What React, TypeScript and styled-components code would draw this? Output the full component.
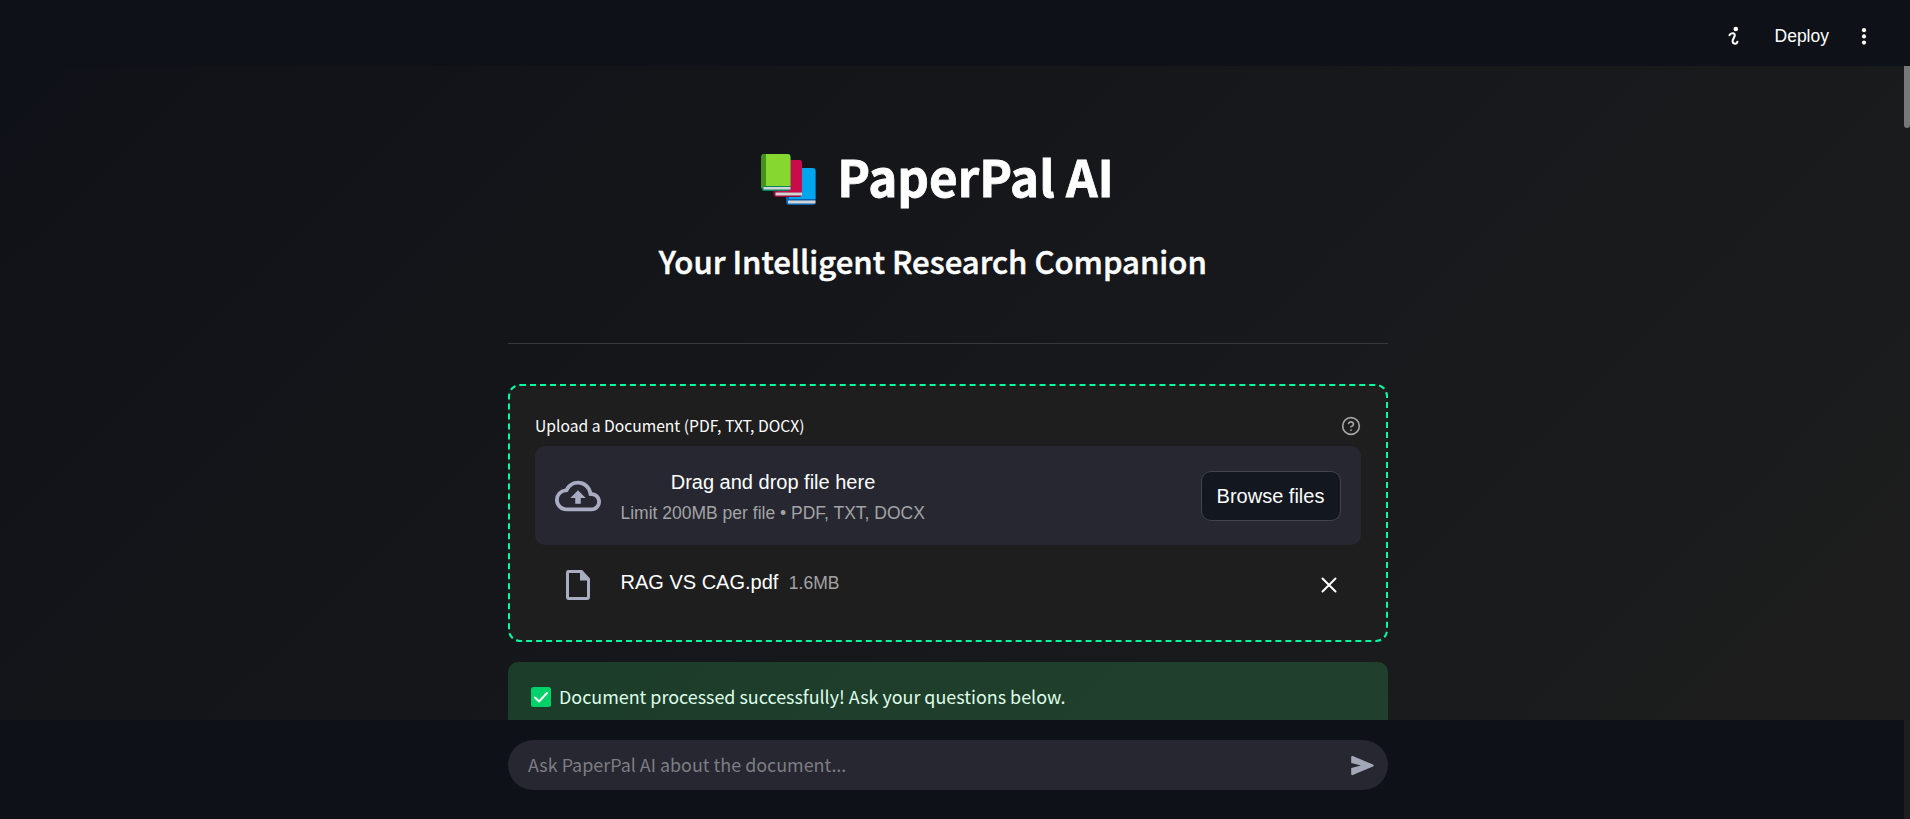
import React from "react";
import styled, { createGlobalStyle } from "styled-components";

const source = `"Source Sans Pro", "Noto Sans CJK SC", sans-serif`;
const arial = `"Liberation Sans", Arial, sans-serif`;

const GlobalStyle = createGlobalStyle`
  * { box-sizing: border-box; }
  body { margin: 0; background: #0e1117; overflow: hidden; }
  h1, h2, p { margin: 0; }
  svg { display: block; flex: none; }
`;

const Page = styled.div`
  display: grid;
  grid-template-rows: 66px 654px 99px;
  height: 819px;
  color: #fff;
  font-family: ${arial};
  background: linear-gradient(135deg, #0e1117, #1e1e1e);
`;

const Header = styled.header`
  display: flex;
  align-items: center;
  justify-content: flex-end;
  padding: 6px 36.5px 0 0;
  background: #0e1117;
`;

const Deploy = styled.button`
  margin: 0 24.5px 1px 34px;
  padding: 0;
  border: 0;
  background: none;
  color: #fff;
  font: 17.5px/24px ${arial};
`;

const Scroller = styled.div`
  display: flex;
  justify-content: space-between;
  overflow: hidden;
`;

const Thumb = styled.div`
  width: 6px;
  height: 62px;
  border-radius: 0 0 3px 3px;
  background: #787878;
`;

const Column = styled.main`
  width: 880px;
  margin-left: 508px;
`;

const Title = styled.h1`
  display: flex;
  align-items: center;
  height: 66px;
  margin-top: 80px;
  padding-left: 253px;
  gap: 21.3px;
  font: 700 49.3px/60px ${source};
  white-space: nowrap;
  -webkit-text-stroke: 0.8px #fff;

  span {
    margin-bottom: 7px;
  }
`;

const Subtitle = styled.h2`
  height: 42px;
  margin-top: 28px;
  padding-left: 150.7px;
  font: 500 31.1px/42px ${source};
  white-space: nowrap;
  -webkit-text-stroke: 0.5px #fff;
`;

const Rule = styled.hr`
  height: 1px;
  margin: 61px 0 40px;
  border: 0;
  background: #37383c;
`;

const UploadCard = styled.section`
  height: 258px;
  padding: 25px;
  border: 2px dashed #00ffa3;
  border-radius: 12px;
  background: #1e1e1e;
`;

const LabelRow = styled.div`
  display: flex;
  justify-content: space-between;
  align-items: center;
  height: 30px;
  margin-bottom: 5px;
  font: 15.65px/28px ${source};
`;

const Dropzone = styled.div`
  display: flex;
  align-items: center;
  height: 99px;
  padding: 0 20px;
  border-radius: 10px;
  background: #262730;
`;

const DropText = styled.div`
  margin-left: 19.5px;
  padding-top: 3px;
  flex: 1;
`;

const DropTitle = styled.p`
  width: 305px;
  text-align: center;
  font: 20px/31px ${arial};
`;

const Muted = styled.span`
  display: block;
  color: #a3a3a5;
  font: 17.5px/30px ${arial};
`;

const Browse = styled.button`
  width: 140px;
  height: 50px;
  padding: 0 1px 0 0;
  border: 1px solid #41444c;
  border-radius: 10px;
  background: #131720;
  color: #fff;
  font: 20px/30px ${arial};
`;

const FileRow = styled.div`
  display: flex;
  align-items: center;
  height: 80px;
  padding: 0 20.5px 0 28px;
`;

const FileName = styled.span`
  margin: 0 10.5px 7px 27.5px;
  font: 20px/30px ${arial};
`;

const FileSize = styled(Muted)`
  flex: 1;
  margin-bottom: 4px;
`;

const Success = styled.div`
  display: flex;
  align-items: center;
  gap: 8px;
  height: 90px;
  margin-top: 20px;
  padding: 0 23px 20px;
  border-radius: 10px;
  background: rgba(61, 213, 109, 0.2);
  color: #dffde9;
  font: 17.92px/28px ${source};

  span {
    margin-bottom: 2px;
  }
`;

const Bottom = styled.footer`
  width: 1904px;
  padding: 20px 0 0 508px;
  background: #0e1117;
`;

const ChatBox = styled.div`
  display: flex;
  align-items: center;
  justify-content: space-between;
  width: 880px;
  height: 50px;
  padding: 0 13px 0 20px;
  border-radius: 25px;
  background: #262730;
  color: #7d7d83;
  font: 17.92px/28px ${source};

  span {
    margin-bottom: 2px;
  }
`;

const Books = () => (
  <svg width="55" height="51" viewBox="0 0 55 51" stroke="none">
    <rect x="25" y="14" width="29.5" height="37" rx="3" fill="#0063b1" />
    <path d="M28 14h23.500q3 0 3 3v28H28z" fill="#00a6ed" />
    <path d="M27 46.500h27.500v3H27z" fill="#d3d3d3" />
    <rect x="12.500" y="6" width="28.500" height="37" rx="3" fill="#990838" />
    <path d="M16 6h22q3 0 3 3v29H16z" fill="#ca0b4a" />
    <path d="M14.500 38.500H41v3H14.500z" fill="#d3d3d3" />
    <rect x="0.500" y="0" width="29" height="37" rx="3" fill="#008463" />
    <path d="M3.500 0h23q3 0 3 3v29H4.500Q2 32 0.500 34V3Q0.500 0 3.500 0z" fill="#86d72f" />
    <path d="M3.500 0h1.500v32Q2 32 0.500 34V3Q0.500 0 3.500 0z" fill="#44911b" />
    <path d="M2.500 33h27v2.500h-27z" fill="#d3d3d3" />
  </svg>
);

const Check = () => (
  <svg width="20" height="20" viewBox="0 0 20 20">
    <rect width="20" height="20" rx="2.500" fill="#00d26a" />
    <path d="M4 10.500 8 14.500 16 6" fill="none" stroke="#fff" strokeWidth="2" strokeLinecap="round" strokeLinejoin="round" />
  </svg>
);

export default function App() {
  return (
    <>
      <GlobalStyle />
      <Page>
        <Header>
          <svg width="13" height="20" viewBox="0 0 13 20" fill="none" stroke="#fff" strokeWidth="2.100" strokeLinecap="round">
            <circle cx="7.800" cy="3" r="2.300" fill="#fff" stroke="none" />
            <path d="M1.500 9.200C2.500 6.600 7.800 6.200 6.600 10.200L4.800 14C3.600 18.200 8.400 18.800 9.400 15.800" />
          </svg>
          <Deploy>Deploy</Deploy>
          <svg width="20" height="20" viewBox="0 0 20 20" fill="#fff">
            <circle cx="10" cy="4.200" r="2.100" />
            <circle cx="10" cy="10.400" r="2.100" />
            <circle cx="10" cy="16.600" r="2.100" />
          </svg>
        </Header>
        <Scroller>
          <Column>
            <Title><Books /><span>PaperPal AI</span></Title>
            <Subtitle>Your Intelligent Research Companion</Subtitle>
            <Rule />
            <UploadCard>
              <LabelRow>
                <span>Upload a Document (PDF, TXT, DOCX)</span>
                <svg width="20" height="20" viewBox="0 0 24 24" fill="none" stroke="#a3a3a3" strokeWidth="2" strokeLinecap="round" strokeLinejoin="round">
                  <circle cx="12" cy="12" r="10" />
                  <path d="M9.090 9a3 3 0 0 1 5.830 1c0 2-3 3-3 3M12 17h.010" />
                </svg>
              </LabelRow>
              <Dropzone>
                <svg width="46" height="46" viewBox="0 0 24 24" fill="#a9adc1">
                  <path d="M19.350 10.040A7.490 7.490 0 0 0 12 4C9.110 4 6.600 5.640 5.350 8.040A5.994 5.994 0 0 0 0 14c0 3.310 2.690 6 6 6h13c2.760 0 5-2.240 5-5 0-2.640-2.050-4.780-4.650-4.960zM19 18H6c-2.210 0-4-1.790-4-4 0-2.050 1.530-3.760 3.560-3.970l1.070-.110.500-.950A5.469 5.469 0 0 1 12 6c2.620 0 4.880 1.860 5.390 4.430l.300 1.500 1.530.110A2.980 2.980 0 0 1 22 15c0 1.650-1.350 3-3 3zM8 13h2.550v3h2.900v-3H16l-4-4-4 4z" />
                </svg>
                <DropText>
                  <DropTitle>Drag and drop file here</DropTitle>
                  <Muted>Limit 200MB per file • PDF, TXT, DOCX</Muted>
                </DropText>
                <Browse>Browse files</Browse>
              </Dropzone>
              <FileRow>
                <svg width="30" height="30" viewBox="0 0 30 30">
                  <path d="M5.500 1.500H18.500L25.500 9V27Q25.500 28.500 24 28.500H5.500Q4.500 28.500 4.500 27V3Q4.500 1.500 5.500 1.500z" fill="none" stroke="#a9adc1" strokeWidth="3" />
                  <path d="M17 1V10.500H26z" fill="#a9adc1" />
                </svg>
                <FileName>RAG VS CAG.pdf</FileName>
                <FileSize>1.6MB</FileSize>
                <svg width="24" height="24" viewBox="0 0 24 24" stroke="#fff" strokeWidth="2" strokeLinecap="round">
                  <path d="M5.500 5.500 18.500 18.500M18.500 5.500 5.500 18.500" />
                </svg>
              </FileRow>
            </UploadCard>
            <Success><Check /><span>Document processed successfully! Ask your questions below.</span></Success>
          </Column>
          <Thumb />
        </Scroller>
        <Bottom>
          <ChatBox>
            <span>Ask PaperPal AI about the document...</span>
            <svg width="25" height="25" viewBox="0 0 25 25" fill="#a3a8b8">
              <path d="M1.200 4Q1.200 2.500 2.700 3L23 11.500Q24.500 12.500 23 13.500L2.700 22Q1.200 22.500 1.200 21V15L11 12.500 1.200 10z" />
            </svg>
          </ChatBox>
        </Bottom>
      </Page>
    </>
  );
}
